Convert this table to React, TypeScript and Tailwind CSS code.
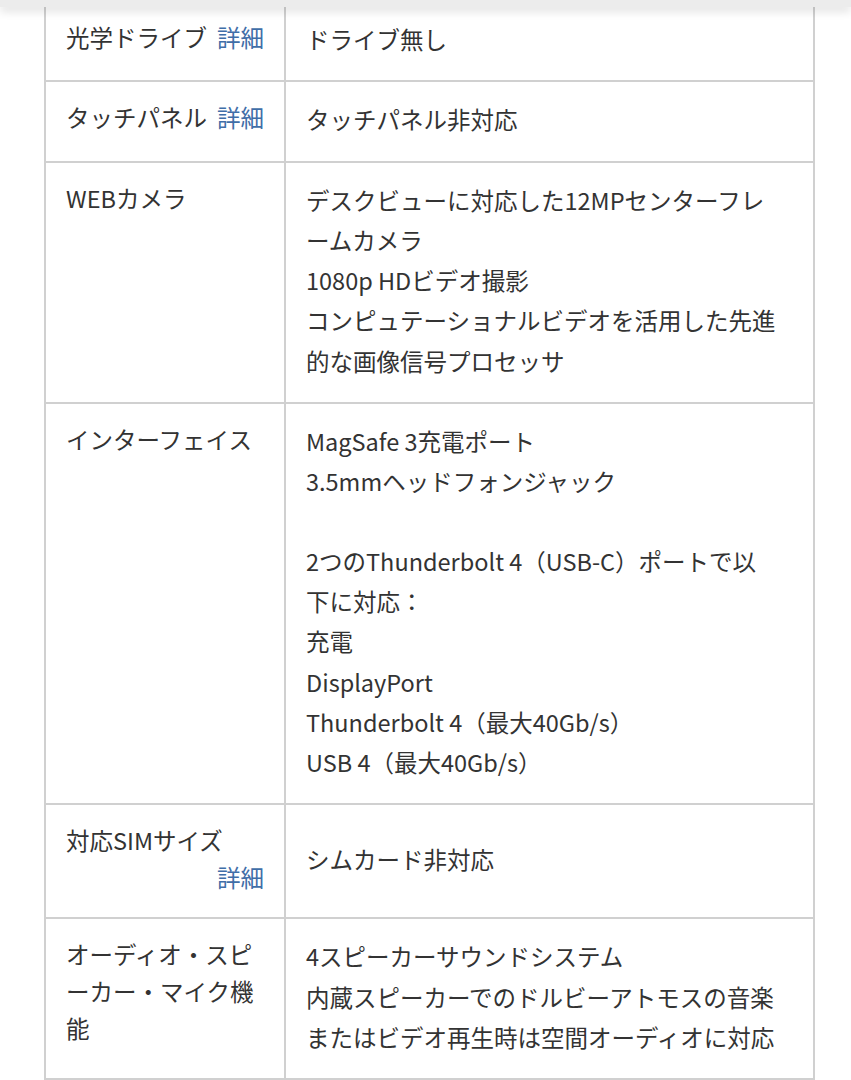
import React from 'react';

type Row = {
  label: React.ReactNode;
  value: string[];
};

const link = 'text-[#3f6ea8]';

const rows: Row[] = [
  {
    label: (
      <div className="flex justify-between">
        <span>光学ドライブ</span>
        <span className={link}>詳細</span>
      </div>
    ),
    value: ['ドライブ無し'],
  },
  {
    label: (
      <div className="flex justify-between">
        <span>タッチパネル</span>
        <span className={link}>詳細</span>
      </div>
    ),
    value: ['タッチパネル非対応'],
  },
  {
    label: <div>WEBカメラ</div>,
    value: [
      'デスクビューに対応した12MPセンターフレ',
      'ームカメラ',
      '1080p HDビデオ撮影',
      'コンピュテーショナルビデオを活用した先進',
      '的な画像信号プロセッサ',
    ],
  },
  {
    label: <div>インターフェイス</div>,
    value: [
      'MagSafe 3充電ポート',
      '3.5mmヘッドフォンジャック',
      '',
      '2つのThunderbolt 4（USB-C）ポートで以',
      '下に対応：',
      '充電',
      'DisplayPort',
      'Thunderbolt 4（最大40Gb/s）',
      'USB 4（最大40Gb/s）',
    ],
  },
  {
    label: (
      <div>
        <div>対応SIMサイズ</div>
        <div className={`text-right ${link}`}>詳細</div>
      </div>
    ),
    value: ['シムカード非対応'],
  },
  {
    label: (
      <div>
        <div>オーディオ・スピ</div>
        <div>ーカー・マイク機</div>
        <div>能</div>
      </div>
    ),
    value: [
      '4スピーカーサウンドシステム',
      '内蔵スピーカーでのドルビーアトモスの音楽',
      'またはビデオ再生時は空間オーディオに対応',
    ],
  },
];

export default function App() {
  return (
    <div
      className="relative w-[851px] h-[1080px] overflow-hidden bg-white text-[#333] text-[23.5px]"
      style={{ fontFamily: '"Noto Sans CJK JP", "Noto Sans", sans-serif' }}
    >
      {/* header edge */}
      <div className="absolute top-0 left-0 right-0 z-10 h-[7px] bg-[#ececec] shadow-[0_4px_10px_rgba(0,0,0,0.14)]" />

      <div className="ml-[44px] w-[771px] border-t-2 border-l-2 border-r-2 border-[#d0d0d0]">
        {rows.map((row, i) => (
          <div key={i} className="flex border-b-2 border-[#d0d0d0]">
            <div className="w-[240px] shrink-0 border-r-2 border-[#d0d0d0] px-5 pt-[17px] pb-[21px] leading-[37px]">
              {row.label}
            </div>
            <div className="flex flex-1 flex-col justify-center px-5 pt-[17px] pb-[21px] leading-[40.3px] whitespace-nowrap">
              {row.value.map((line, j) =>
                line ? (
                  <div key={j} className="h-[40.3px]">
                    {line}
                  </div>
                ) : (
                  <div key={j} className="h-[39px]" />
                )
              )}
            </div>
          </div>
        ))}
      </div>
    </div>
  );
}
